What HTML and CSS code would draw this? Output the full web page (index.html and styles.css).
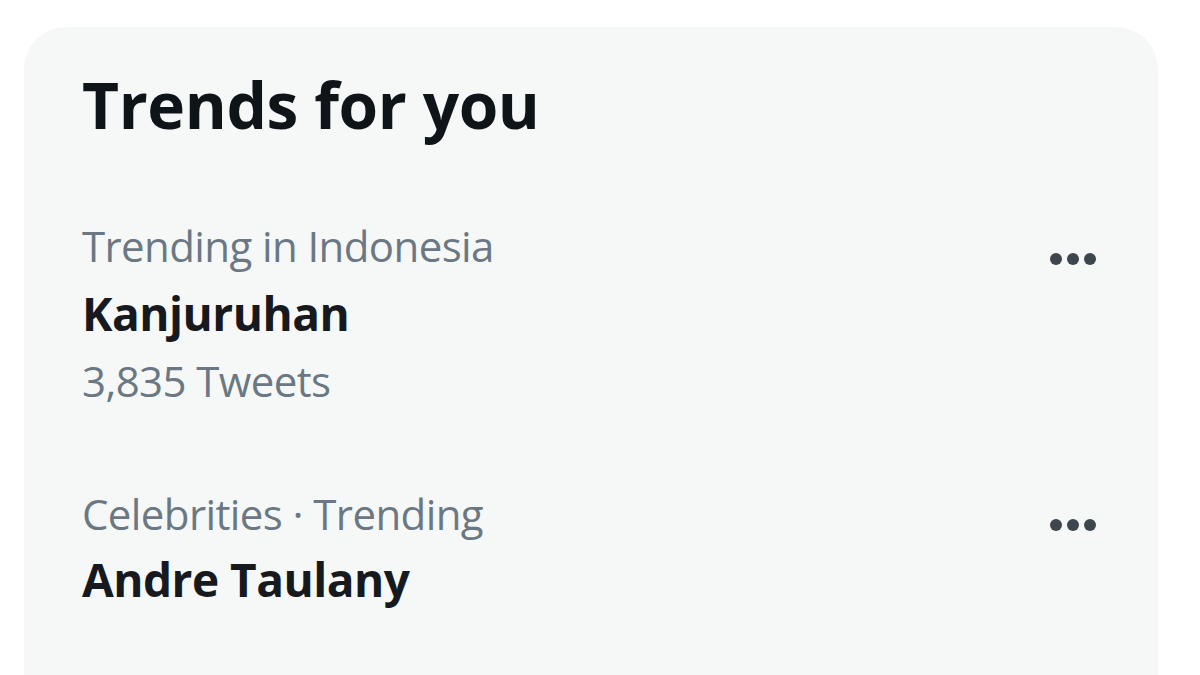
FILE: index.html
```html
<!DOCTYPE html>
<html>
<head>
<meta charset="utf-8">
<link rel="stylesheet" href="styles.css">
</head>
<body>
<div class="card">
  <h2 class="title">Trends for you</h2>
  <div class="trend first">
    <div class="info">
      <div class="meta">Trending in Indonesia</div>
      <div class="name">Kanjuruhan</div>
      <div class="meta count">3,835 Tweets</div>
    </div>
    <div class="more"><span></span><span></span><span></span></div>
  </div>
  <div class="trend second">
    <div class="info">
      <div class="meta">Celebrities · Trending</div>
      <div class="name">Andre Taulany</div>
    </div>
    <div class="more"><span></span><span></span><span></span></div>
  </div>
</div>
</body>
</html>
```
FILE: styles.css
```css
html, body {
  margin: 0;
  padding: 0;
  background: #ffffff;
  width: 1200px;
  height: 675px;
  overflow: hidden;
  font-family: "Open Sans", "Noto Sans", "Liberation Sans", sans-serif;
}
.card {
  margin: 27px 42px 0 24px;
  height: 648px;
  background: #f6f8f8;
  border-radius: 42px 42px 0 0;
  padding: 43px 62px 0 58px;
  box-sizing: border-box;
}
.title {
  margin: 0;
  font-size: 64px;
  line-height: 70px;
  font-weight: 700;
  color: #0f1419;
  letter-spacing: -0.4px;
}
.trend {
  display: flex;
  justify-content: space-between;
  align-items: flex-start;
}
.trend.first { margin-top: 72px; }
.trend.second { margin-top: 66px; }
.meta {
  font-size: 42px;
  line-height: 67px;
  color: #6b7883;
  letter-spacing: -0.6px;
}
.name {
  font-size: 46px;
  line-height: 68px;
  font-weight: 700;
  color: #16191d;
  letter-spacing: -0.5px;
}
.trend.second .name { line-height: 64px; }
.more {
  display: flex;
  gap: 5px;
  margin-top: 41px;
}
.trend.second .more { margin-top: 39px; }
.more span {
  width: 12px;
  height: 12px;
  border-radius: 50%;
  background: #3d454d;
}
```
